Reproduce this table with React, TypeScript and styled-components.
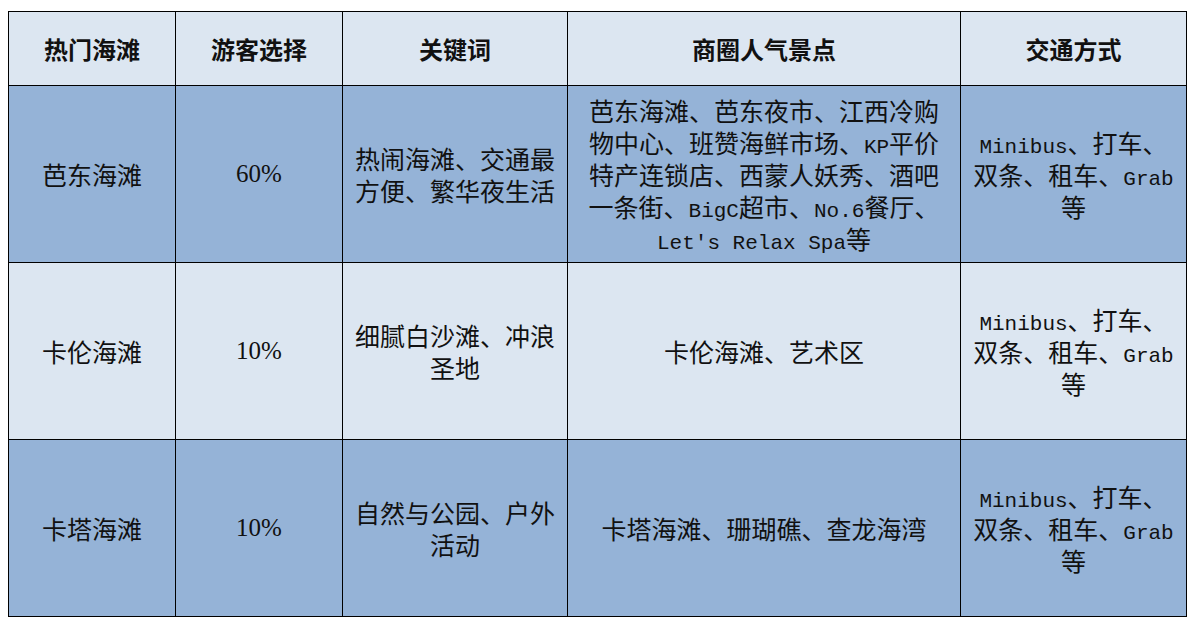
import React from 'react';
import styled, { createGlobalStyle } from 'styled-components';

const GlobalStyle = createGlobalStyle`
  html, body {
    margin: 0;
    padding: 0;
    background: #ffffff;
  }
  body {
    font-family: "Noto Sans CJK SC", sans-serif;
  }
`;

const Page = styled.div`
  padding: 11px 0 0 8px;
`;

const Table = styled.table`
  border-collapse: collapse;
  table-layout: fixed;
  width: 1178px;
  color: #111;
  font-family: "Noto Sans CJK SC", sans-serif;
  font-size: 25px;
`;

const HeadCell = styled.th`
  height: 73px;
  background: #dce6f1;
  border: 1.5px solid #000;
  font-weight: 700;
  font-size: 24px;
  line-height: 30px;
  text-align: center;
  vertical-align: middle;
  padding: 0;
`;

const Row = styled.tr<{ $dark?: boolean }>`
  background: ${p => (p.$dark ? '#95b3d7' : '#dce6f1')};
`;

const Cell = styled.td<{ $num?: boolean }>`
  height: 176px;
  border: 1.5px solid #000;
  text-align: center;
  vertical-align: middle;
  padding: 0 2px;
  line-height: 32px;
  white-space: nowrap;
  font-family: ${p =>
    p.$num ? '"Liberation Serif", serif' : '"Noto Sans CJK SC", sans-serif'};
  font-size: 25px;
  font-weight: 400;
`;

const Lat = styled.span`
  font-family: "Liberation Mono", monospace;
  font-size: 21px;
  line-height: 1;
`;

const cols = [167, 167, 225, 393, 226];
const heads = ['热门海滩', '游客选择', '关键词', '商圈人气景点', '交通方式'];

const transport = (
  <>
    <Lat>Minibus</Lat>、打车、<br />
    双条、租车、<Lat>Grab</Lat>
    <br />等
  </>
);

type RowData = {
  name: string;
  pct: string;
  keys: React.ReactNode;
  spots: React.ReactNode;
};

const rows: RowData[] = [
  {
    name: '芭东海滩',
    pct: '60%',
    keys: (
      <>
        热闹海滩、交通最<br />方便、繁华夜生活
      </>
    ),
    spots: (
      <>
        芭东海滩、芭东夜市、江西冷购<br />
        物中心、班赞海鲜市场、<Lat>KP</Lat>平价<br />
        特产连锁店、西蒙人妖秀、酒吧<br />
        一条街、<Lat>BigC</Lat>超市、<Lat>No.6</Lat>餐厅、<br />
        <Lat>Let's Relax Spa</Lat>等
      </>
    ),
  },
  {
    name: '卡伦海滩',
    pct: '10%',
    keys: (
      <>
        细腻白沙滩、冲浪<br />圣地
      </>
    ),
    spots: '卡伦海滩、艺术区',
  },
  {
    name: '卡塔海滩',
    pct: '10%',
    keys: (
      <>
        自然与公园、户外<br />活动
      </>
    ),
    spots: '卡塔海滩、珊瑚礁、查龙海湾',
  },
];

export default function App() {
  return (
    <>
      <GlobalStyle />
      <Page>
        <Table>
          <colgroup>
            {cols.map((w, i) => (
              <col key={i} style={{ width: w }} />
            ))}
          </colgroup>
          <thead>
            <tr>
              {heads.map(h => (
                <HeadCell key={h}>{h}</HeadCell>
              ))}
            </tr>
          </thead>
          <tbody>
            {rows.map((r, i) => (
              <Row key={r.name} $dark={i !== 1}>
                <Cell>{r.name}</Cell>
                <Cell $num>{r.pct}</Cell>
                <Cell>{r.keys}</Cell>
                <Cell>{r.spots}</Cell>
                <Cell>{transport}</Cell>
              </Row>
            ))}
          </tbody>
        </Table>
      </Page>
    </>
  );
}
